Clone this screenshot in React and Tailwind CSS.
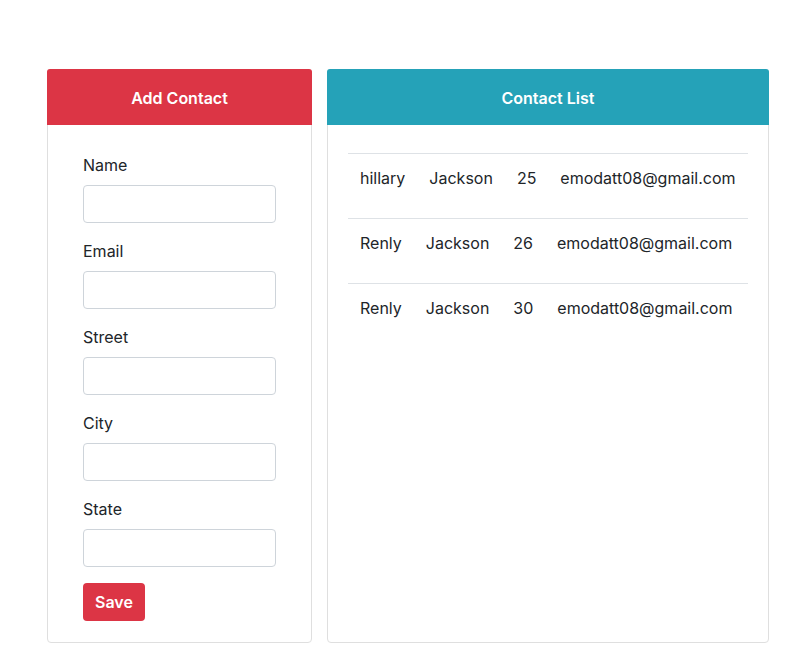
import React from "react";

// form fields for the left card
const fields = ["Name", "Email", "Street", "City", "State"];

// contacts shown in the right card
const contacts = [
  { first: "hillary", last: "Jackson", age: 25, email: "emodatt08@gmail.com" },
  { first: "Renly", last: "Jackson", age: 26, email: "emodatt08@gmail.com" },
  { first: "Renly", last: "Jackson", age: 30, email: "emodatt08@gmail.com" },
];

export default function App() {
  return (
    <div
      className="min-h-[649px] bg-white text-[#212529] pt-[69px] pl-[47px]"
      style={{ fontFamily: 'Inter, "Liberation Sans", Arial, sans-serif' }}
    >
      <div className="flex gap-[15px] items-stretch">
        {/* Add Contact - Section */}
        <div className="w-[265px] border border-[#dfdfdf] rounded-[4px] flex flex-col">
          <div className="h-[56px] pt-[2px] bg-[#dc3545] rounded-t-[3px] flex items-center justify-center text-white text-[16px] font-semibold -mx-px -mt-px">
            Add Contact
          </div>
          <div className="pt-[28px] px-[35px] pb-[21px]">
            {fields.map((f) => (
              <div key={f} className="mb-4">
                <label className="block text-[16px] leading-[24px] mb-2">{f}</label>
                <input
                  type="text"
                  className="block w-[193px] h-[38px] border border-[#ced4da] rounded-[4px] outline-none px-3"
                />
              </div>
            ))}
            <button className="h-[38px] px-[12px] bg-[#dc3545] text-white font-semibold text-[16px] rounded-[4px]">
              Save
            </button>
          </div>
        </div>

        {/* Contact List - Section */}
        <div className="w-[442px] border border-[#dfdfdf] rounded-[4px] flex flex-col">
          <div className="h-[56px] pt-[2px] bg-[#25a2b8] rounded-t-[3px] flex items-center justify-center text-white text-[16px] font-semibold -mx-px -mt-px">
            Contact List
          </div>
          <div className="pt-[28px] px-[20px]">
            {contacts.map((c, i) => (
              <div
                key={i}
                className="flex gap-[24px] h-[65px] pt-[12px] pl-3 border-t border-[#dee2e6] text-[16px] leading-[24px]"
              >
                <span>{c.first}</span>
                <span>{c.last}</span>
                <span>{c.age}</span>
                <span>{c.email}</span>
              </div>
            ))}
          </div>
        </div>
      </div>
    </div>
  );
}
